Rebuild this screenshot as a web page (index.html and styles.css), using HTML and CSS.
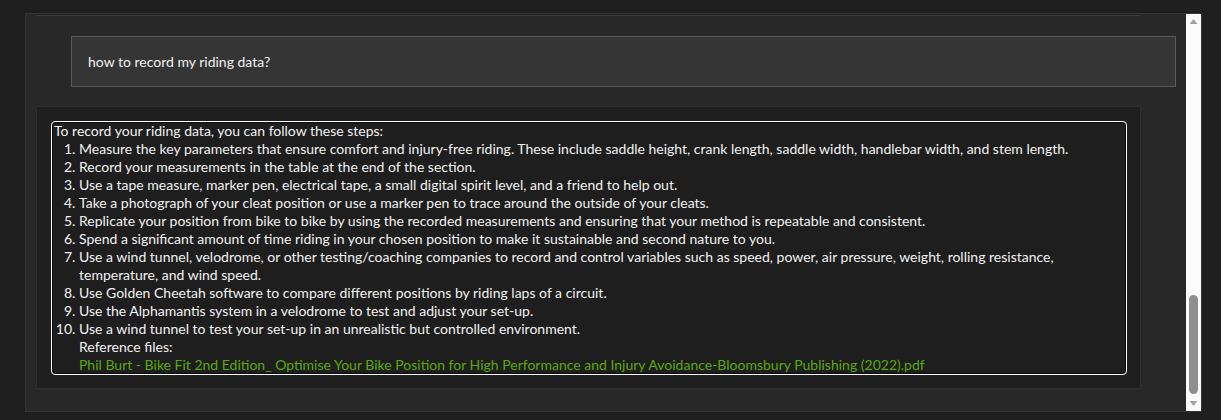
FILE: index.html
```html
<!DOCTYPE html>
<html lang="en">
<head>
<meta charset="utf-8">
<title>Chat</title>
<link rel="stylesheet" href="styles.css">
</head>
<body>
<div class="panel">
  <div class="feed">
    <div class="prev"></div>
    <div class="user-msg">how to record my riding data?</div>
    <div class="answer">
      <div class="answer-box">
        <div class="intro">To record your riding data, you can follow these steps:</div>
        <ol class="steps">
          <li>Measure the key parameters that ensure comfort and injury-free riding. These include saddle height, crank length, saddle width, handlebar width, and stem length.</li>
          <li>Record your measurements in the table at the end of the section.</li>
          <li>Use a tape measure, marker pen, electrical tape, a small digital spirit level, and a friend to help out.</li>
          <li>Take a photograph of your cleat position or use a marker pen to trace around the outside of your cleats.</li>
          <li>Replicate your position from bike to bike by using the recorded measurements and ensuring that your method is repeatable and consistent.</li>
          <li>Spend a significant amount of time riding in your chosen position to make it sustainable and second nature to you.</li>
          <li>Use a wind tunnel, velodrome, or other testing/coaching companies to record and control variables such as speed, power, air pressure, weight, rolling resistance, temperature, and wind speed.</li>
          <li>Use Golden Cheetah software to compare different positions by riding laps of a circuit.</li>
          <li>Use the Alphamantis system in a velodrome to test and adjust your set-up.</li>
          <li>Use a wind tunnel to test your set-up in an unrealistic but controlled environment.</li>
        </ol>
        <div class="refs">
          <div>Reference files:</div>
          <div class="ref-file">Phil Burt - Bike Fit 2nd Edition_ Optimise Your Bike Position for High Performance and Injury Avoidance-Bloomsbury Publishing (2022).pdf</div>
        </div>
      </div>
    </div>
  </div>
  <div class="scrollbar">
    <svg class="arrow" width="15" height="14" viewBox="0 0 15 14"><path d="M3.5 10 L7.5 5 L11.5 10 Z" fill="#a3a3a3"/></svg>
    <div class="track"><div class="thumb"></div></div>
    <svg class="arrow" width="15" height="14" viewBox="0 0 15 14"><path d="M3.5 4 L7.5 9 L11.5 4 Z" fill="#a3a3a3"/></svg>
  </div>
</div>
</body>
</html>
```

FILE: styles.css
```css
html, body {
  margin: 0;
  padding: 0;
  background: #1f1f1f;
}
body {
  padding: 13px 0 0 25px;
  font-family: Lato, "Noto Sans", sans-serif;
  font-size: 14px;
  color: #f2f2f2;
}
.panel {
  width: 1175px;
  height: 397px;
  background: #282828;
  border: 1px solid #333333;
  display: flex;
  overflow: hidden;
}
.feed {
  flex: 1;
  display: flex;
  flex-direction: column;
  overflow: hidden;
}
.prev {
  margin: 0 45px 0 10px;
  height: 1px;
  border-bottom: 1px solid #3a3a3a;
  background: #222;
}
.user-msg {
  margin: 20px 10px 0 45px;
  height: 49px;
  line-height: 49px;
  padding-left: 16px;
  background: #353535;
  border: 1px solid #5a5a5a;
}
.answer {
  margin: 19px 45px 0 10px;
  background: #1f1f1f;
  border: 1px solid #2e2e2e;
  padding: 14px 13px 13px 14px;
}
.answer-box {
  border: 1.5px solid #ffffff;
  box-shadow: inset 0 0 0 1px #0b0b0b;
  border-radius: 4px;
  padding: 0 2px;
  line-height: 18px;
  background: #1e1e1e;
}
.steps {
  margin: 0;
  padding-left: 25px;
}
.refs {
  padding-left: 25px;
}
.ref-file {
  color: #5aa80c;
}
.scrollbar {
  width: 15px;
  background: #fbfbfb;
  display: flex;
  flex-direction: column;
}
.arrow {
  display: block;
  flex: none;
}
.track {
  flex: 1;
  position: relative;
}
.thumb {
  position: absolute;
  left: 3px;
  right: 3px;
  top: 267px;
  height: 99px;
  border-radius: 5px;
  background: #8f8f8f;
}
```
